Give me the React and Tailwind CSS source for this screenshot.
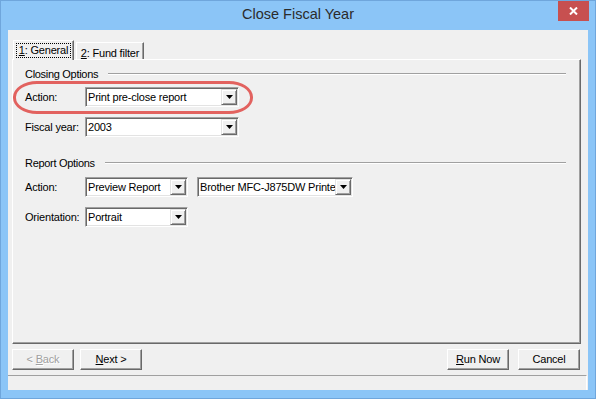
import React from 'react';

const font = { fontFamily: '"Liberation Sans", Arial, sans-serif' };

const Arrow = () => (
  <svg width="7" height="4" viewBox="0 0 7 4">
    <path d="M0 0h7L3.5 4z" fill="#000" />
  </svg>
);

const Combo = ({ w, value }) => (
  <div className={`${w} h-[20px] p-px flex bg-white border border-t-[#a0a0a0] border-l-[#a0a0a0] border-b-white border-r-white shadow-[inset_1px_1px_0_#696969,inset_-1px_-1px_0_#e3e3e3]`}>
    <div className="flex-1 min-w-0 overflow-hidden whitespace-nowrap pl-[1px] text-[11px] leading-[16px] tracking-[-0.2px] text-black">
      {value}
    </div>
    <div className="w-[16px] h-[16px] shrink-0 flex items-center justify-center bg-[#f0f0f0] border border-t-[#e3e3e3] border-l-[#e3e3e3] border-b-[#696969] border-r-[#696969] shadow-[inset_1px_1px_0_#fff,inset_-1px_-1px_0_#a0a0a0]">
      <Arrow />
    </div>
  </div>
);

const Row = ({ label, children, mt }) => (
  <div className={`flex items-center ${mt}`}>
    <div className="w-[60px] text-[11px] tracking-[-0.2px] text-black">{label}</div>
    {children}
  </div>
);

const Header = ({ text, mt }) => (
  <div className={`h-[14px] flex items-center ${mt}`}>
    <span className="text-[11px] tracking-[-0.3px] text-black">{text}</span>
    <div className="flex-1 h-[2px] ml-[10px] mr-[14px] border-t border-t-[#a0a0a0] border-b border-b-white" />
  </div>
);

const Btn = ({ children, disabled }) => (
  <div className={`w-[62px] h-[21px] flex items-center justify-center bg-[#f0f0f0] border border-t-white border-l-white border-b-[#696969] border-r-[#696969] shadow-[inset_-1px_-1px_0_#a0a0a0] text-[11px] tracking-[-0.2px] ${disabled ? 'text-[#a0a0a0] [text-shadow:1px_1px_0_#fff]' : 'text-black'}`}>
    {children}
  </div>
);

export default function App() {
  return (
    <div style={font} className="relative w-[596px] h-[399px] bg-[#8bc5f7] border border-[#6fa6dc] flex flex-col">
      {/* Title bar */}
      <div className="h-[29px] flex items-center justify-center">
        <span className="text-[14.5px] text-[#2b2b2b] pb-[1px]">Close Fiscal Year</span>
      </div>
      <div className="absolute top-0 right-[6px] w-[31px] h-[20px] bg-[#c75050] flex items-center justify-center">
        <svg width="9" height="8" viewBox="0 0 9 8">
          <path d="M1 0.5l7 7M8 0.5l-7 7" stroke="#fff" strokeWidth="2" />
        </svg>
      </div>

      {/* Client area */}
      <div className="ml-[7px] w-[580px] h-[360px] bg-[#f0f0f0] flex flex-col">
        {/* Tabs */}
        <div className="h-[20px] mt-[10px] pl-[5px] flex items-end">
          <div className="relative z-10 w-[61px] h-[20px] bg-[#f0f0f0] border-t border-l border-white border-r border-r-[#696969] shadow-[inset_-1px_0_0_#a0a0a0] pt-[2px] pl-[2px]">
            <div className="w-[55px] h-[15px] flex items-center justify-center outline outline-1 outline-dotted outline-black -outline-offset-1 text-[11px] tracking-[-0.2px] text-black">
              <span><span className="underline">1</span>: General</span>
            </div>
          </div>
          <div className="ml-[2px] w-[68px] h-[18px] bg-[#f0f0f0] border-t border-l border-white border-r border-r-[#696969] shadow-[inset_-1px_0_0_#a0a0a0] flex items-start justify-center pt-[2px] text-[11px] tracking-[-0.2px] text-black">
            <span><span className="underline">2</span>: Fund filter</span>
          </div>
        </div>

        {/* Tab panel */}
        <div className="-mt-px ml-[4px] w-[569px] h-[285px] bg-[#f0f0f0] border border-t-white border-l-white border-b-[#696969] border-r-[#696969] shadow-[inset_-1px_-1px_0_#a0a0a0] pl-[12px] flex flex-col">
          <Header text="Closing Options" mt="mt-[7px]" />
          <Row label="Action:" mt="mt-[6px]">
            <Combo w="w-[154px]" value="Print pre-close report" />
          </Row>
          <Row label="Fiscal year:" mt="mt-[10px]">
            <Combo w="w-[154px]" value="2003" />
          </Row>

          <Header text="Report Options" mt="mt-[19px]" />
          <Row label="Action:" mt="mt-[7px]">
            <Combo w="w-[103px]" value="Preview Report" />
            <div className="ml-[9px]">
              <Combo w="w-[156px]" value="Brother MFC-J875DW Printer" />
            </div>
          </Row>
          <Row label="Orientation:" mt="mt-[10px]">
            <Combo w="w-[103px]" value="Portrait" />
          </Row>
        </div>

        {/* Buttons */}
        <div className="mt-[5px] pl-[4px] pr-[8px] flex items-center">
          <Btn disabled><span>&lt; <span className="underline">B</span>ack</span></Btn>
          <div className="ml-[6px]">
            <Btn><span><span className="underline">N</span>ext &gt;</span></Btn>
          </div>
          <div className="flex-1" />
          <Btn><span><span className="underline">R</span>un Now</span></Btn>
          <div className="ml-[9px]">
            <Btn>Cancel</Btn>
          </div>
        </div>

        {/* Status bar */}
        <div className="mt-[5px] h-[15px] mr-[1px] border-t border-t-[#a0a0a0] border-r border-r-white" />
      </div>

      {/* Highlight ellipse */}
      <div className="absolute left-[12px] top-[80px] w-[240px] h-[33px] border-[3px] border-[#e0524f] rounded-[24px/16px] opacity-90" />
    </div>
  );
}
